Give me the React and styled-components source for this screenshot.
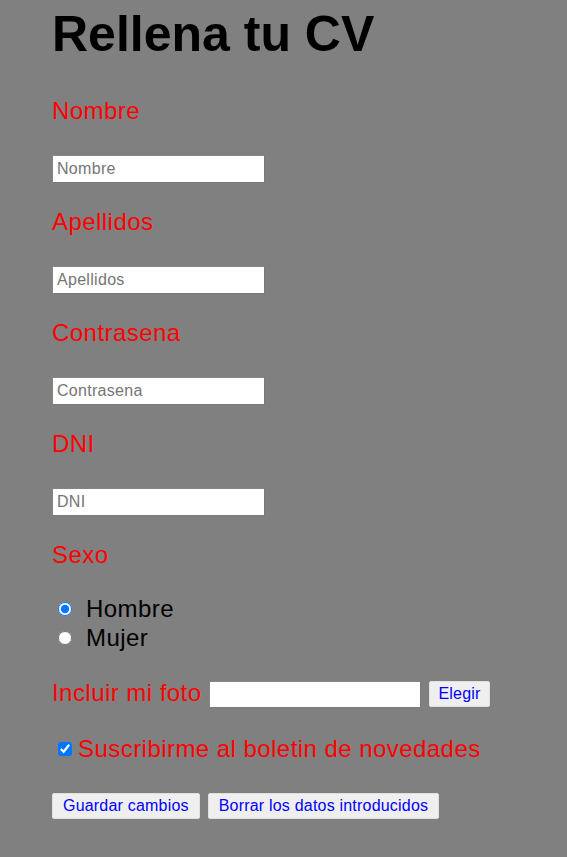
import React from 'react'
import styled, { createGlobalStyle } from 'styled-components'

const GlobalStyle = createGlobalStyle`
  html, body {
    margin: 0;
    background: #808080;
    font-family: "Liberation Sans", Arial, sans-serif;
  }
`

const Page = styled.form`
  padding: 5px 0 36px 52px;
  display: flex;
  flex-direction: column;
  align-items: flex-start;
`

const Title = styled.h1`
  margin: 0 0 34px;
  font-size: 50px;
  line-height: 58px;
  font-weight: bold;
  color: #000;
`

const Label = styled.label`
  display: block;
  font-size: 24px;
  line-height: 28px;
  letter-spacing: 0.45px;
  color: #ff0000;
`

const Field = styled.div`
  display: flex;
  flex-direction: column;
  align-items: flex-start;
  margin-bottom: 25px;
`

const TextInput = styled.input`
  box-sizing: border-box;
  flex: none;
  width: ${p => p.$width || 213}px;
  height: ${p => p.$height || 28}px;
  margin: ${p => p.$margin || '30px 0 0'};
  padding: 0 4px;
  border: 1px solid #7a7a7a;
  border-top-color: #858585;
  border-left-color: #858585;
  background: #fff;
  font-family: "Liberation Sans", Arial, sans-serif;
  font-size: 16px;
  letter-spacing: 0.3px;
  color: #000;
  outline: none;

  &::placeholder {
    color: #757575;
  }
`

const Options = styled.div`
  display: flex;
  flex-direction: column;
  margin: 25px 0 27px;
`

const Option = styled.label`
  display: flex;
  align-items: center;
  gap: 14px;
  font-size: 24px;
  line-height: 29px;
  letter-spacing: 0.45px;
  color: #000;
`

const Check = styled.input`
  width: 14px;
  height: 14px;
  margin: 0 0 0 6px;
`

const FotoRow = styled.div`
  display: flex;
  align-items: flex-start;
  gap: 8px;
  margin-bottom: 27px;
`

const Button = styled.button`
  box-sizing: border-box;
  flex: none;
  height: 26px;
  padding: 0 ${p => p.$pad || 10}px;
  margin-top: ${p => p.$top || 0}px;
  border: 1px solid #e0e0e0;
  border-radius: 2px;
  background: #efefef;
  color: #0000ff;
  font-family: "Liberation Sans", Arial, sans-serif;
  font-size: 16px;
  letter-spacing: 0.2px;
  cursor: pointer;
`

const Subscribe = styled.label`
  display: flex;
  align-items: center;
  gap: 6px;
  font-size: 24px;
  line-height: 28px;
  letter-spacing: 0.45px;
  color: #ff0000;
  margin-bottom: 30px;
`

const Actions = styled.div`
  display: flex;
  gap: 8px;
`

const fields = ['Nombre', 'Apellidos', 'Contrasena', 'DNI']

export default function App() {
  return (
    <>
      <GlobalStyle />
      <Page onSubmit={e => e.preventDefault()}>
        <Title>Rellena tu CV</Title>
        {fields.map(name => (
          <Field key={name}>
            <Label htmlFor={name}>{name}</Label>
            <TextInput
              id={name}
              type={name === 'Contrasena' ? 'password' : 'text'}
              placeholder={name}
            />
          </Field>
        ))}
        <Label>Sexo</Label>
        <Options>
          <Option>
            <Check type="radio" name="sexo" defaultChecked />
            Hombre
          </Option>
          <Option>
            <Check type="radio" name="sexo" />
            Mujer
          </Option>
        </Options>
        <FotoRow>
          <Label htmlFor="foto">Incluir mi foto</Label>
          <TextInput id="foto" $width={212} $height={27} $margin="2px 0 0" />
          <Button type="button" $top={2} $pad={8}>Elegir</Button>
        </FotoRow>
        <Subscribe>
          <Check type="checkbox" defaultChecked />
          Suscribirme al boletin de novedades
        </Subscribe>
        <Actions>
          <Button type="submit">Guardar cambios</Button>
          <Button type="reset">Borrar los datos introducidos</Button>
        </Actions>
      </Page>
    </>
  )
}
